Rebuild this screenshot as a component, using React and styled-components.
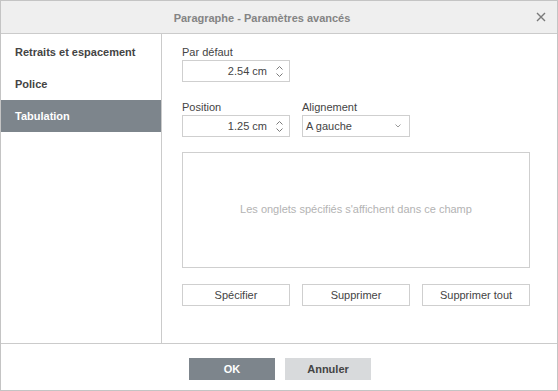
import React from "react";
import styled, { createGlobalStyle } from "styled-components";

const Global = createGlobalStyle`
  html, body { margin: 0; padding: 0; background: #fff; }
  body { font-family: Arial, "Liberation Sans", sans-serif; font-size: 11px; color: #444; }
  * { box-sizing: border-box; }
`;

const Dialog = styled.div`
  width: 558px;
  height: 391px;
  border: 1px solid #c4c4c4;
  display: flex;
  flex-direction: column;
  background: #fff;
`;

const Header = styled.div`
  height: 33px;
  flex: none;
  background: #efefef;
  border-bottom: 1px solid #cbcbcb;
  position: relative;
  display: flex;
  align-items: center;
  justify-content: center;
  padding-right: 34px;
`;

const Title = styled.div`
  font-weight: bold;
  font-size: 11px;
  color: #848484;
  padding-top: 1px;
`;

const Close = styled.div`
  position: absolute;
  right: 11px;
  top: 11px;
  width: 10px;
  height: 10px;
  display: flex;
`;

const Body = styled.div`
  flex: 1;
  display: flex;
  min-height: 0;
`;

const Sidebar = styled.div`
  width: 161px;
  flex: none;
  border-right: 1px solid #cbcbcb;
  padding-top: 2px;
  display: flex;
  flex-direction: column;
`;

const NavItem = styled.div`
  height: 32px;
  display: flex;
  align-items: center;
  padding-left: 14px;
  font-weight: bold;
  font-size: 11px;
  color: ${(p) => (p.$active ? "#fff" : "#444")};
  background: ${(p) => (p.$active ? "#7d858c" : "transparent")};
`;

const Content = styled.div`
  flex: 1;
  padding: 11px 0 0 20px;
  display: flex;
  flex-direction: column;
`;

const Row = styled.div`
  display: flex;
  gap: 12px;
  margin-bottom: ${(p) => p.$mb || 0}px;
`;

const Field = styled.div`
  display: flex;
  flex-direction: column;
`;

const Label = styled.div`
  height: 14px;
  line-height: 14px;
  margin-bottom: 1px;
  font-size: 11px;
  color: #444;
`;

const Box = styled.div`
  width: 108px;
  height: 22px;
  border: 1px solid #cfcfcf;
  display: flex;
  align-items: center;
  font-size: 11px;
  color: #444;
`;

const SpinValue = styled.div`
  flex: 1;
  text-align: right;
  padding-right: 6px;
`;

const SpinArrows = styled.div`
  width: 16px;
  height: 20px;
  display: flex;
  flex-direction: column;
  align-items: center;
  justify-content: center;
  gap: 3px;
  padding-right: 3px;
`;

const SelectValue = styled.div`
  flex: 1;
  padding-left: 3px;
`;

const SelectArrow = styled.div`
  width: 14px;
  display: flex;
  align-items: center;
  padding-right: 4px;
`;

const TabList = styled.div`
  width: 348px;
  height: 116px;
  border: 1px solid #cfcfcf;
  display: flex;
  align-items: center;
  justify-content: center;
  color: #b3b3b3;
  font-size: 11px;
  margin-bottom: 16px;
  padding-bottom: 2px;
`;

const Button = styled.button`
  width: 108px;
  height: 22px;
  border: 1px solid #cfcfcf;
  background: #fff;
  font-family: inherit;
  font-size: 11px;
  color: #444;
  padding: 0;
`;

const Footer = styled.div`
  height: 47px;
  flex: none;
  border-top: 1px solid #cbcbcb;
  display: flex;
  justify-content: center;
  gap: 10px;
  padding-top: 14px;
  padding-left: 2px;
`;

const FooterButton = styled.button`
  width: 86px;
  height: 22px;
  border: none;
  font-family: inherit;
  font-size: 11px;
  font-weight: bold;
  padding: 0;
  background: ${(p) => (p.$primary ? "#7d858c" : "#d8dadc")};
  color: ${(p) => (p.$primary ? "#fff" : "#444")};
`;

const Chevron = ({ up }) => (
  <svg width="7" height="4" viewBox="0 0 7 4">
    <path
      d={up ? "M0.5 3.5 L3.5 0.5 L6.5 3.5" : "M0.5 0.5 L3.5 3.5 L6.5 0.5"}
      fill="none"
      stroke="#7a7a7a"
      strokeWidth="1"
    />
  </svg>
);

const Spinner = ({ value }) => (
  <Box>
    <SpinValue>{value}</SpinValue>
    <SpinArrows>
      <Chevron up />
      <Chevron />
    </SpinArrows>
  </Box>
);

export default function App() {
  return (
    <>
      <Global />
      <Dialog>
        <Header>
          <Title>Paragraphe - Paramètres avancés</Title>
          <Close>
            <svg width="10" height="10" viewBox="0 0 10 10">
              <path d="M1 1 L9 9 M9 1 L1 9" stroke="#7a7a7a" strokeWidth="1.4" />
            </svg>
          </Close>
        </Header>
        <Body>
          <Sidebar>
            <NavItem>Retraits et espacement</NavItem>
            <NavItem>Police</NavItem>
            <NavItem $active>Tabulation</NavItem>
          </Sidebar>
          <Content>
            <Row $mb={18}>
              <Field>
                <Label>Par défaut</Label>
                <Spinner value="2.54 cm" />
              </Field>
            </Row>
            <Row $mb={15}>
              <Field>
                <Label>Position</Label>
                <Spinner value="1.25 cm" />
              </Field>
              <Field>
                <Label>Alignement</Label>
                <Box>
                  <SelectValue>A gauche</SelectValue>
                  <SelectArrow>
                    <svg width="6" height="4" viewBox="0 0 6 4">
                      <path d="M0.5 0.5 L3 3 L5.5 0.5" fill="none" stroke="#9a9a9a" strokeWidth="1" />
                    </svg>
                  </SelectArrow>
                </Box>
              </Field>
            </Row>
            <TabList>Les onglets spécifiés s'affichent dans ce champ</TabList>
            <Row>
              <Button>Spécifier</Button>
              <Button>Supprimer</Button>
              <Button>Supprimer tout</Button>
            </Row>
          </Content>
        </Body>
        <Footer>
          <FooterButton $primary>OK</FooterButton>
          <FooterButton>Annuler</FooterButton>
        </Footer>
      </Dialog>
    </>
  );
}
